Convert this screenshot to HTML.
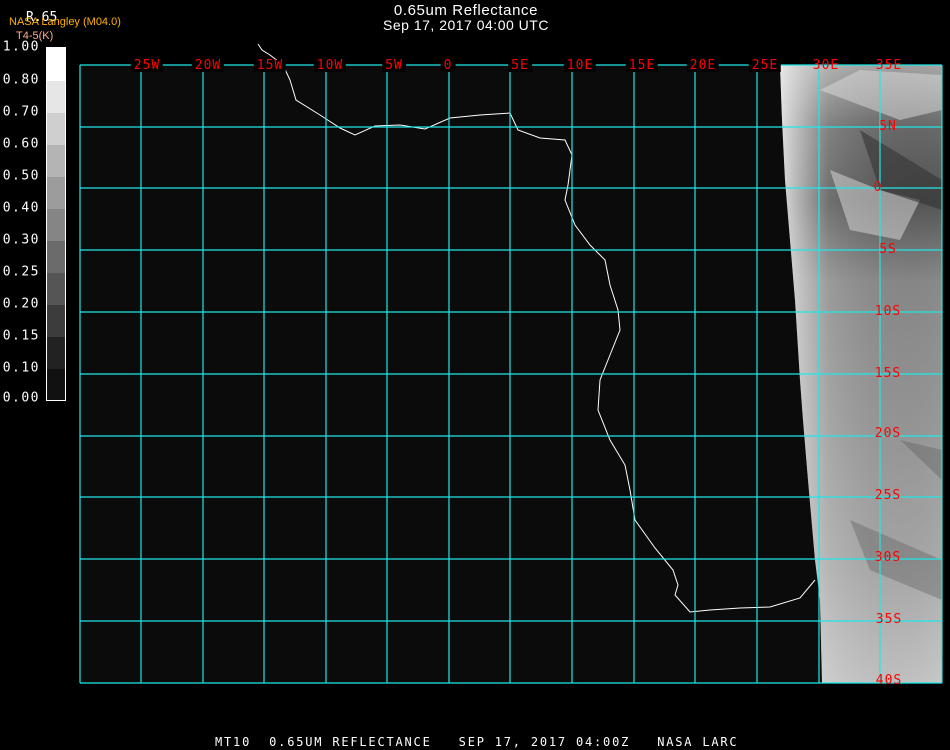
<!DOCTYPE html>
<html><head><meta charset="utf-8"><style>
body{margin:0;width:950px;height:750px;background:#000;overflow:hidden;position:relative;font-family:"Liberation Sans",sans-serif}
.t{position:absolute;color:#fff;white-space:nowrap}
.m{font-family:"DejaVu Sans Mono","Liberation Mono",monospace}
.lb{position:absolute;color:#fff;font-family:"DejaVu Sans Mono","Liberation Mono",monospace;font-size:13px;right:910px;transform:translateY(-50%);letter-spacing:1.5px}
.r{position:absolute;color:#f00;font-family:"DejaVu Sans Mono","Liberation Mono",monospace;font-size:13px;transform:translate(-50%,-50%);letter-spacing:1px;line-height:12px;padding:0 3px}
.k{background:#000}
</style></head><body>
<div class="t" style="left:0;width:932px;text-align:center;top:2px;font-size:15px;letter-spacing:0.6px">0.65um Reflectance</div>
<div class="t" style="left:0;width:932px;text-align:center;top:17px;font-size:14px;letter-spacing:0.5px">Sep 17, 2017 04:00 UTC</div>
<div class="t m" style="left:26px;top:10px;font-size:13px">R.65</div>
<div class="t" style="left:9px;top:16px;font-size:11px;color:#ffb000">NASA Langley (M04.0)</div>
<div class="t" style="left:16px;top:30px;font-size:11px;color:#ffb090">T4-5(K)</div>
<div style="position:absolute;left:46px;top:47px;width:18px;height:352px;border:1px solid #fff;background:linear-gradient(#fff 0 33px,#e6e6e6 33px 65px,#cfcfcf 65px 97px,#b4b4b4 97px 129px,#9c9c9c 129px 161px,#858585 161px 193px,#6b6b6b 193px 225px,#555 225px 257px,#3c3c3c 257px 289px,#222 289px 321px,#111 321px)"></div>
<div class="lb" style="top:47px">1.00</div><div class="lb" style="top:80px">0.80</div><div class="lb" style="top:112px">0.70</div><div class="lb" style="top:144px">0.60</div><div class="lb" style="top:176px">0.50</div><div class="lb" style="top:208px">0.40</div><div class="lb" style="top:240px">0.30</div><div class="lb" style="top:272px">0.25</div><div class="lb" style="top:304px">0.20</div><div class="lb" style="top:336px">0.15</div><div class="lb" style="top:368px">0.10</div><div class="lb" style="top:398px">0.00</div>
<svg style="position:absolute;left:0;top:0" width="950" height="750">
<defs><linearGradient id="g" x1="0" y1="0" x2="0" y2="1">
<stop offset="0" stop-color="#a8a8a8"/><stop offset="0.1" stop-color="#6a6a6a"/><stop offset="0.22" stop-color="#555"/><stop offset="0.35" stop-color="#8a8a8a"/><stop offset="0.6" stop-color="#9a9a9a"/><stop offset="0.8" stop-color="#aaa"/><stop offset="1" stop-color="#c8c8c8"/></linearGradient>
<linearGradient id="h" x1="0" y1="0" x2="1" y2="0"><stop offset="0" stop-color="#eee" stop-opacity=".9"/><stop offset="0.3" stop-color="#ddd" stop-opacity=".2"/><stop offset="1" stop-color="#000" stop-opacity="0"/></linearGradient></defs>
<rect x="80" y="65" width="862" height="618" fill="#0b0b0b"/>
<polygon points="780,65 942,65 942,683 822,683 820,600 815,560 808,480 803,420 800,380 795,300 790,240 785,180 782,120" fill="url(#g)"/>
<polygon points="780,65 942,65 942,683 822,683 820,600 815,560 808,480 803,420 800,380 795,300 790,240 785,180 782,120" fill="url(#h)"/>
<path d="M820,90 L900,120 L942,110 L942,75 L860,70Z M830,170 L880,190 L920,200 L900,240 L850,230Z" fill="#ddd" opacity=".5"/>
<path d="M860,130 L942,180 L942,210 L880,190Z" fill="#333" opacity=".6"/>
<path d="M850,520 L942,560 L942,600 L870,570Z M900,440 L942,450 L942,480Z" fill="#555" opacity=".35"/>
<polyline fill="none" stroke="#fff" stroke-width="1" points="258,44 262,50 270,55 283,65 290,80 296,100 320,115 340,128 355,135 375,126 400,125 425,129 450,118 480,115 510,113 518,130 540,138 565,140 572,155 568,185 565,200 575,225 590,245 605,260 610,285 618,310 620,330 610,355 600,380 598,410 610,440 625,465 630,490 635,520 655,548 673,570 678,585 675,595 690,612 710,610 740,608 770,607 800,598 815,580"/>
<g stroke="#22e6e6" stroke-width="1.2">
<line x1="80" y1="65" x2="942" y2="65"/><line x1="80" y1="127" x2="942" y2="127"/><line x1="80" y1="188" x2="942" y2="188"/><line x1="80" y1="250" x2="942" y2="250"/><line x1="80" y1="312" x2="942" y2="312"/><line x1="80" y1="374" x2="942" y2="374"/><line x1="80" y1="436" x2="942" y2="436"/><line x1="80" y1="497" x2="942" y2="497"/><line x1="80" y1="559" x2="942" y2="559"/><line x1="80" y1="621" x2="942" y2="621"/><line x1="80" y1="683" x2="942" y2="683"/>
<line x1="80" y1="65" x2="80" y2="683"/><line x1="141" y1="65" x2="141" y2="683"/><line x1="203" y1="65" x2="203" y2="683"/><line x1="264" y1="65" x2="264" y2="683"/><line x1="326" y1="65" x2="326" y2="683"/><line x1="387" y1="65" x2="387" y2="683"/><line x1="449" y1="65" x2="449" y2="683"/><line x1="510" y1="65" x2="510" y2="683"/><line x1="572" y1="65" x2="572" y2="683"/><line x1="634" y1="65" x2="634" y2="683"/><line x1="695" y1="65" x2="695" y2="683"/><line x1="757" y1="65" x2="757" y2="683"/><line x1="819" y1="65" x2="819" y2="683"/><line x1="880" y1="65" x2="880" y2="683"/><line x1="942" y1="65" x2="942" y2="683"/>
</g></svg>
<div class="r k" style="left:147px;top:66px">25W</div><div class="r k" style="left:208px;top:66px">20W</div><div class="r k" style="left:270px;top:66px">15W</div><div class="r k" style="left:330px;top:66px">10W</div><div class="r k" style="left:394px;top:66px">5W</div><div class="r k" style="left:448px;top:66px">0</div><div class="r k" style="left:520px;top:66px">5E</div><div class="r k" style="left:580px;top:66px">10E</div><div class="r k" style="left:642px;top:66px">15E</div><div class="r k" style="left:703px;top:66px">20E</div><div class="r k" style="left:765px;top:66px">25E</div><div class="r" style="left:826px;top:66px">30E</div><div class="r" style="left:889px;top:66px">35E</div>
<div class="r" style="left:888px;top:127px">5N</div><div class="r" style="left:878px;top:188px">0</div><div class="r" style="left:888px;top:250px">5S</div><div class="r" style="left:888px;top:312px">10S</div><div class="r" style="left:888px;top:374px">15S</div><div class="r" style="left:888px;top:434px">20S</div><div class="r" style="left:888px;top:496px">25S</div><div class="r" style="left:888px;top:558px">30S</div><div class="r" style="left:889px;top:620px">35S</div><div class="r" style="left:889px;top:681px">40S</div>
<div class="t m" style="left:215px;top:735px;font-size:12px;letter-spacing:1.8px;white-space:pre">MT10  0.65UM REFLECTANCE   SEP 17, 2017 04:00Z   NASA LARC</div>
</body></html>
